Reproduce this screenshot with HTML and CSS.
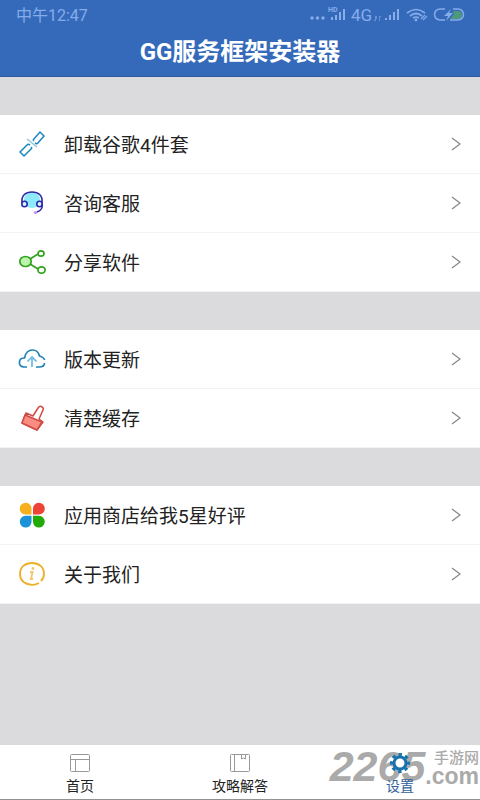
FILE: index.html
```html
<!DOCTYPE html>
<html lang="zh-CN">
<head>
<meta charset="utf-8">
<meta name="viewport" content="width=device-width, initial-scale=1">
<title>GG服务框架安装器</title>
<link rel="stylesheet" href="styles.css">
</head>
<body>
<header class="header">
  <div class="status">
    <span>中午12:47</span>
    <svg width="156" height="20" viewBox="0 0 156 20" fill="currentColor" aria-hidden="true">
      <circle cx="2" cy="14" r="1.700"/><circle cx="7.500" cy="14" r="1.700"/><circle cx="13" cy="14" r="1.700"/>
      <text x="18" y="8" font-size="7" font-weight="700">HD</text>
      <path d="M21 13h2v3h-2zM25 11h2v5h-2zM29 8h2v8h-2zM33 5h2v11h-2z"/>
      <text x="41" y="17" font-size="17">4G</text>
      <path d="M65 12h2v3h-1v2h-2v-1h1zM69 12h2v1h-1v4h-1z" opacity=".6"/>
      <path d="M75 14h2v2h-2zM79 11h2v5h-2zM83 8h2v8h-2zM87 5h2v11h-2z"/>
      <g fill="none" stroke="currentColor" stroke-width="1.700"><path d="M97 9q9-7 18 0M100 12q6-5 12 0M103 14q3-2 6 0"/><path d="M111 15l4-4M113 16l4-4" stroke-width="1.200"/></g>
      <circle cx="106" cy="16" r="1.400"/>
      <path d="M143 7h5a4 4 0 0 1 0 8h-8l4-5z" fill="#4c9a7b"/>
      <path d="M135 5h-5a5 5 0 0 0 0 11h5M143 5h5a5 5 0 0 1 0 11h-8" fill="none" stroke="currentColor" stroke-width="1.500"/>
      <path d="M141 5l-7 7h4l-2 5 7-8h-4z"/>
    </svg>
  </div>
  <h1 class="title">GG服务框架安装器</h1>
</header>
<main class="main">
  <section class="group">
    <button class="row" type="button">
      <svg class="icon" viewBox="0 0 28 28" fill="none" stroke="#1b87bd" stroke-width="1.500"><path d="M15 10l7-8 4 4-7 8M10 14l-8 8 4 4 8-8M15 10l1 1M19 14l-2-1M10 14l2 1M14 18l-1-1"/><path d="M9 9l10 8" stroke="#8bc5df"/></svg>
      <span class="label">卸载谷歌4件套</span>
      <svg class="arrow" viewBox="0 0 10 14"><path d="M1 1l8 6-8 6"/></svg>
    </button>
    <button class="row" type="button">
      <svg class="icon" viewBox="0 0 28 28" fill="none" stroke="#3028a6" stroke-width="1.600"><ellipse cx="14" cy="11" rx="8" ry="8" fill="#8deaf8" stroke="none"/><path d="M4 14C3 6 8 3 14 3s11 3 10 11"/><ellipse cx="6.500" cy="15" rx="2.700" ry="2.700" fill="#d5f7fc"/><ellipse cx="21.500" cy="15" rx="2.700" ry="2.700" fill="#d5f7fc"/><path d="M24 15c1 5-2 7-5 8"/><circle cx="17.500" cy="23.500" r="1.600" fill="#c18df0" stroke="none"/></svg>
      <span class="label">咨询客服</span>
      <svg class="arrow" viewBox="0 0 10 14"><path d="M1 1l8 6-8 6"/></svg>
    </button>
    <button class="row" type="button">
      <svg class="icon" viewBox="0 0 28 28" fill="none" stroke="#30a31b" stroke-width="1.700"><path d="M12 11l8-5M12 16l8 5"/><ellipse cx="7.500" cy="13.500" rx="5.700" ry="5" fill="#bdf3ae"/><ellipse cx="23" cy="5.500" rx="3" ry="2.700"/><ellipse cx="23.500" cy="22" rx="3.600" ry="3.200"/></svg>
      <span class="label">分享软件</span>
      <svg class="arrow" viewBox="0 0 10 14"><path d="M1 1l8 6-8 6"/></svg>
    </button>
  </section>
  <section class="group">
    <button class="row" type="button">
      <svg class="icon" viewBox="0 0 28 28" fill="none" stroke="#1f83b8" stroke-width="1.700"><path d="M9 22H6C3 22 1 20 1.500 17c0-3 2-4 5-4 1-5 4-8 8-8s6 2 7 6c3 1 5 2 5 4"/><path d="M26.500 18c0 3-2 4-5.500 4h-3"/><path d="M14 22V13M9.500 16.500l4.500-4.500 4.500 4.500" stroke="#6bbbe0"/></svg>
      <span class="label">版本更新</span>
      <svg class="arrow" viewBox="0 0 10 14"><path d="M1 1l8 6-8 6"/></svg>
    </button>
    <button class="row" type="button">
      <svg class="icon" viewBox="0 0 28 28" stroke="#cf4b43" stroke-width="1.500" stroke-linejoin="round"><path d="M8 9l7 3 5-8q2-3 4-1 2 1 1 3l-4 9 4 3-6 8L4 19z" fill="#fff"/><path d="M7 11l17 7-5 8L4 19z" fill="#fb8c82"/></svg>
      <span class="label">清楚缓存</span>
      <svg class="arrow" viewBox="0 0 10 14"><path d="M1 1l8 6-8 6"/></svg>
    </button>
  </section>
  <section class="group">
    <button class="row" type="button">
      <svg class="icon" viewBox="0 0 28 28"><path d="M13.500 13.500H7.500A5.900 5.900 0 1 1 13.500 8z" fill="#f5b01d"/><path d="M15 13.500h6A5.900 5.900 0 1 0 15 8z" fill="#ed4438"/><path d="M13.500 14.800H7.500A5.900 5.900 0 1 0 13.500 20z" fill="#1992d8"/><path d="M15 14.800h6A5.900 5.900 0 1 1 15 20z" fill="#22aa08"/></svg>
      <span class="label">应用商店给我5星好评</span>
      <svg class="arrow" viewBox="0 0 10 14"><path d="M1 1l8 6-8 6"/></svg>
    </button>
    <button class="row" type="button">
      <svg class="icon" viewBox="0 0 28 28" fill="none" stroke="#edb02b" stroke-width="1.900"><path d="M21 23c-7 4-19 1-19-9C2 7 7 3 14 3s12 4 12 11c0 3-1 5-3 7"/><path d="M12 12h2.500l-1.500 7h2" stroke="#f0c96c"/><circle cx="15" cy="8.500" r="1.400" fill="#f0c96c" stroke="none"/></svg>
      <span class="label">关于我们</span>
      <svg class="arrow" viewBox="0 0 10 14"><path d="M1 1l8 6-8 6"/></svg>
    </button>
  </section>
</main>
<nav class="tabs">
  <a class="tab" href="#home">
    <svg width="20" height="20" viewBox="0 0 20 20" fill="none" stroke="#999"><rect x=".5" y="1.500" width="19" height="17" rx="1"/><path d="M1 6.500h18M5.500 6.500v12"/></svg>
    <span>首页</span>
  </a>
  <a class="tab" href="#guide">
    <svg width="20" height="20" viewBox="0 0 20 20" fill="none" stroke="#999"><rect x=".5" y="1.500" width="19" height="17" rx="1"/><path d="M4.500 2v16M11.500 2v4l2-1 2 1V2"/></svg>
    <span>攻略解答</span>
  </a>
  <a class="tab active" href="#settings">
    <svg width="20" height="20" viewBox="0 0 20 20"><circle cx="10" cy="10" r="8.500" fill="none" stroke="#1672ad" stroke-width="3" stroke-dasharray="3.340 3.335" stroke-dashoffset="1.670"/><circle cx="10" cy="10" r="6" fill="#fff" stroke="#1672ad" stroke-width="3"/></svg>
    <span>设置</span>
  </a>
  <div class="watermark">
    <span class="digits">2265</span>
    <span class="site"><span class="site-name">手游网</span><span class="domain">.com</span></span>
  </div>
</nav>
</body>
</html>
```
FILE: styles.css
```css
* { box-sizing: border-box; }
body {
  margin: 0;
  min-height: 100vh;
  display: flex;
  flex-direction: column;
  background: #dbdbdd;
  color: #222;
  font-family: Roboto, "Noto Sans CJK SC", sans-serif;
}
.header {
  background: #356abb;
  border-bottom: 1px solid #2f5b9f;
  height: 77px;
}
.status {
  display: flex;
  justify-content: space-between;
  align-items: center;
  height: 28px;
  padding: 0 14px 0 16px;
  color: #86acea;
  font-size: 16px;
}
.title {
  margin: 0;
  color: #fff;
  font-size: 24px;
  font-weight: 700;
  line-height: 49px;
  text-align: center;
}
.main {
  flex: 1;
  display: flex;
  flex-direction: column;
  gap: 38px;
  padding: 38px 0;
}
.group { background: #fff; }
.row {
  display: flex;
  align-items: center;
  width: 100%;
  height: 59px;
  padding: 0 19px 1px 18px;
  border: 0;
  border-bottom: 1px solid #f3f3f3;
  background: none;
  color: inherit;
  font: inherit;
  text-align: left;
}
.icon { width: 28px; height: 28px; margin-right: 18px; }
.label { flex: 1; padding-top: 4px; font-size: 19px; line-height: 28px; }
.arrow {
  width: 10px;
  height: 14px;
  fill: none;
  stroke: #888;
  stroke-width: 1.3;
}
.tabs {
  position: relative;
  display: grid;
  grid-template-columns: repeat(3, 1fr);
  height: 55px;
  background: #fff;
  border-bottom: 1px solid #929292;
}
.tab {
  position: relative;
  z-index: 1;
  display: flex;
  flex-direction: column;
  align-items: center;
  padding-top: 8px;
  color: #222;
  font-size: 14px;
  line-height: 26px;
  text-decoration: none;
}
.active { color: #315f98; }
.watermark {
  position: absolute;
  right: 1px;
  top: 1px;
  display: flex;
  color: #aaa;
  font-family: "Liberation Sans", "Noto Sans CJK SC", sans-serif;
  font-weight: 700;
}
.digits { font-size: 43px; font-style: italic; line-height: 40px; }
.site {
  display: flex;
  flex-direction: column;
  align-items: flex-end;
  padding-top: 4px;
}
.site-name { font-size: 15px; font-weight: 500; line-height: 16px; }
.domain { font-size: 23px; line-height: 20px; }
```
